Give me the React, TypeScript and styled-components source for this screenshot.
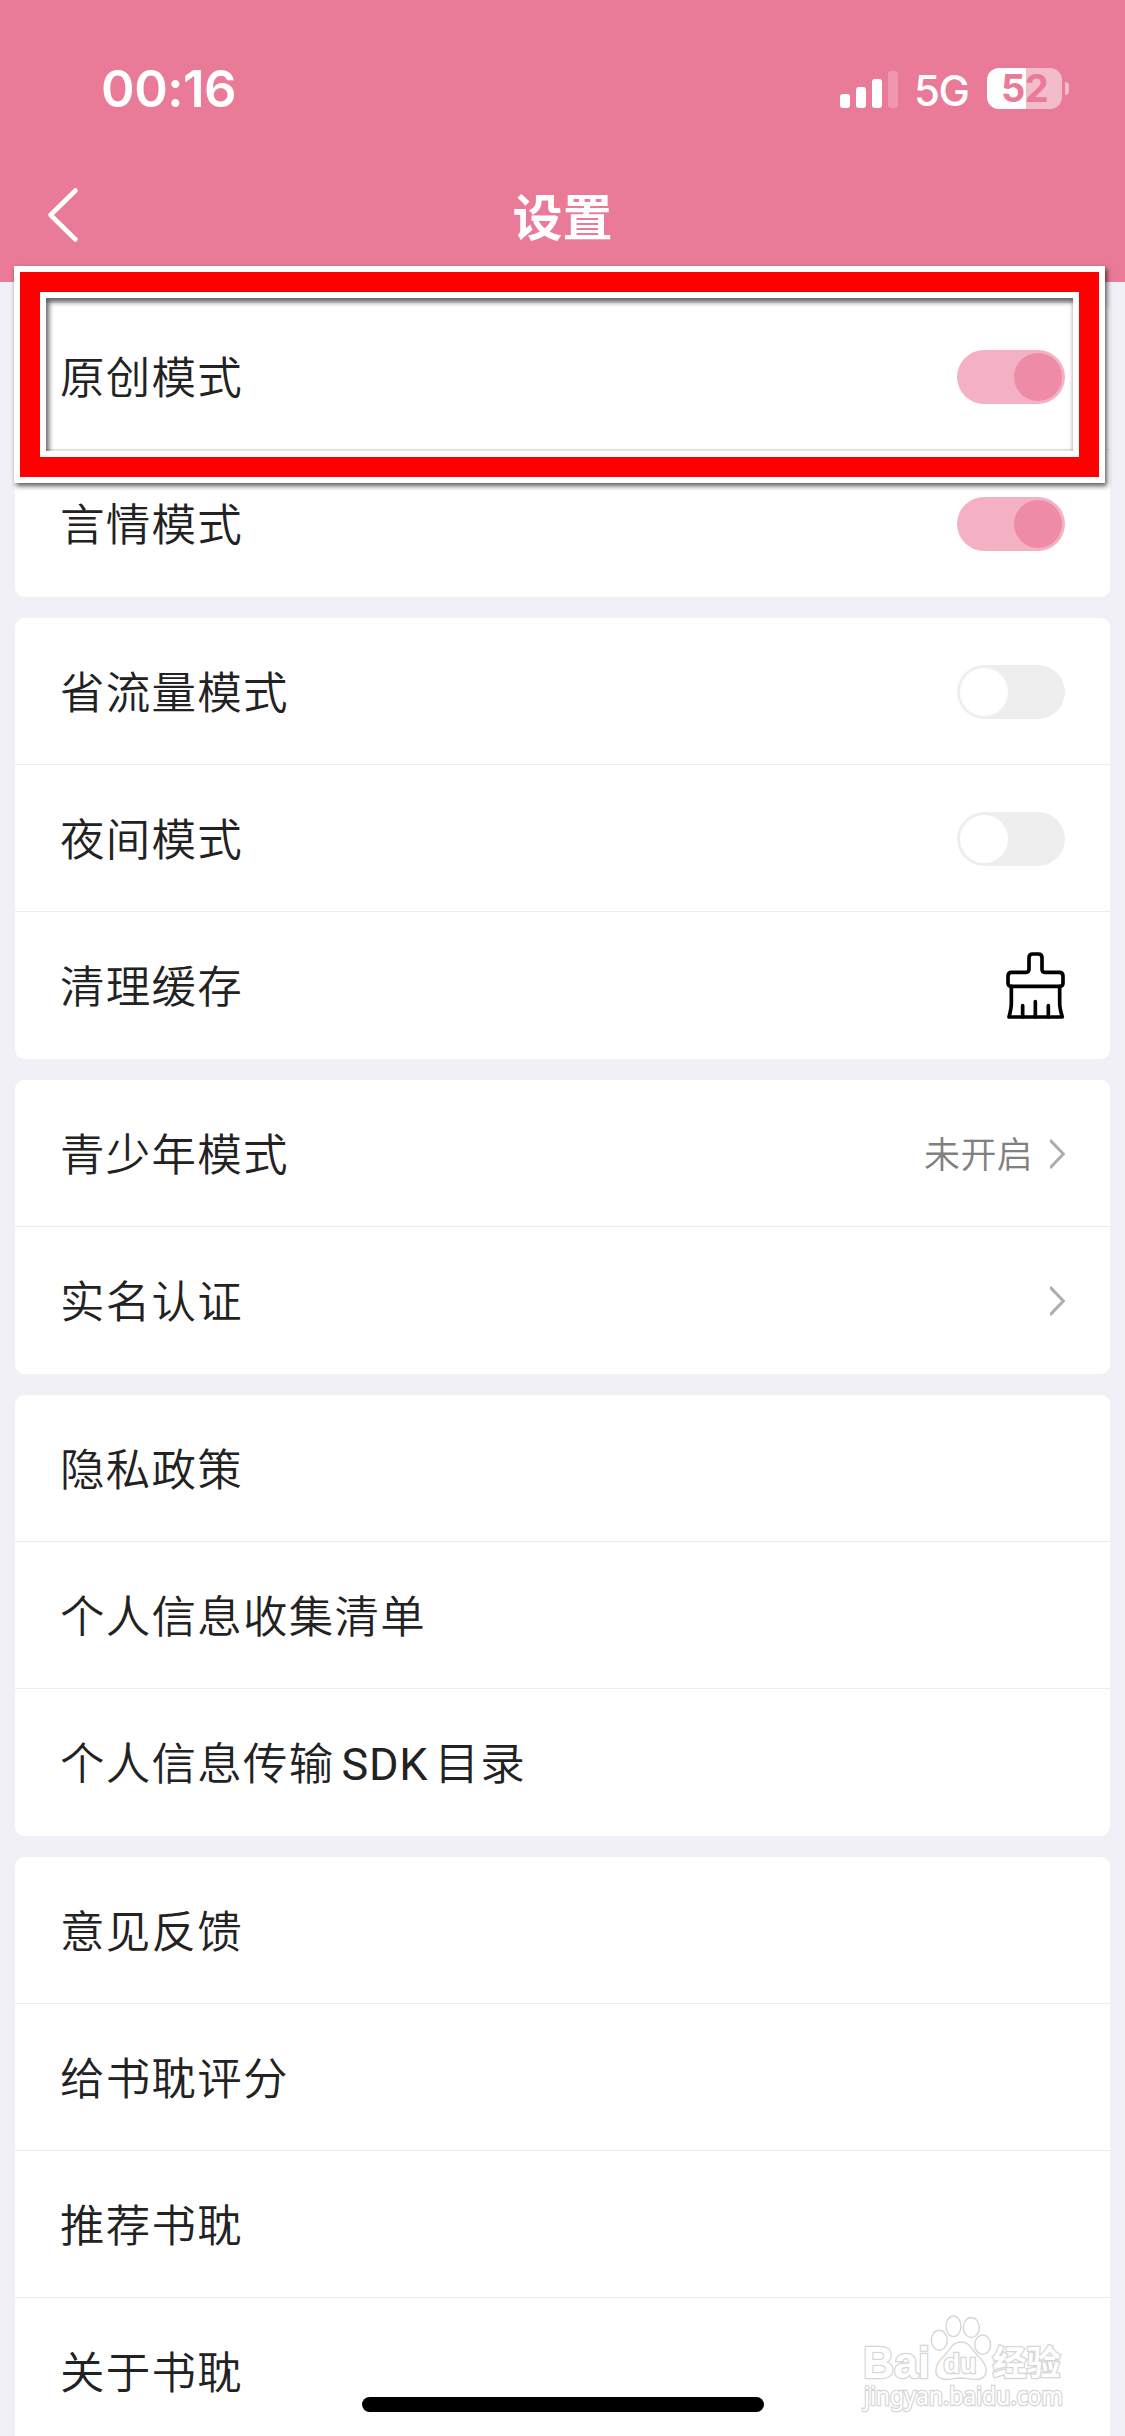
import React from "react";
import styled, { createGlobalStyle } from "styled-components";

const PINK = "#e97a98";
const CJK = `"Noto Sans CJK SC", sans-serif`;

const GlobalStyle = createGlobalStyle`
  * { box-sizing: border-box; }
  body { margin: 0; background: #f1f0f6; }
`;

const Screen = styled.main`
  position: relative;
  display: flex;
  flex-direction: column;
  width: 1125px;
  height: 2436px;
  overflow: hidden;
  background: #f1f0f6;
  font-family: Inter, ${CJK};
`;

const Header = styled.header`
  flex: none;
  height: 282px;
  background: ${PINK};
  color: #fff;
`;

const StatusBar = styled.div`
  display: flex;
  align-items: center;
  justify-content: space-between;
  height: 150px;
  padding: 27px 56px 0 101px;
`;

const Clock = styled.time`
  font-size: 51px;
  line-height: 60px;
  font-weight: 600;
  letter-spacing: -0.5px;
`;

const StatusIcons = styled.div`
  display: flex;
  align-items: center;
`;

const Signal = styled.div`
  display: flex;
  align-items: flex-end;
  gap: 6px;
  height: 38px;
`;

const Bar = styled.i<{ $height: number; $dim?: boolean }>`
  width: 10px;
  height: ${(p) => p.$height}px;
  border-radius: 3px;
  background: #fff;
  opacity: ${(p) => (p.$dim ? 0.22 : 1)};
`;

const Network = styled.span`
  width: 56px;
  margin: 4px 17px 0 16px;
  font-size: 42px;
  line-height: 48px;
  font-weight: 450;
  letter-spacing: -1.5px;
`;

const Battery = styled.div`
  display: flex;
  align-items: center;
  justify-content: center;
  width: 75px;
  height: 41px;
  border-radius: 12px;
  background: linear-gradient(90deg, #fff 39px, #f3bccb 39px);
  color: ${PINK};
  font-size: 38px;
  line-height: 41px;
  font-weight: 700;
  letter-spacing: -0.5px;
`;

const BatteryTip = styled.i`
  width: 4px;
  height: 13px;
  margin-left: 3px;
  border-radius: 0 6px 6px 0;
  background: #f3bccb;
`;

const NavBar = styled.div`
  display: grid;
  grid-template-columns: 200px 1fr 200px;
  align-items: center;
  height: 129px;
  padding-left: 46px;
`;

const Title = styled.h1`
  margin: 0 0 1px -46px;
  text-align: center;
  font-family: ${CJK};
  font-size: 50px;
  line-height: 70px;
  font-weight: 700;
`;

const Cards = styled.div`
  display: flex;
  flex-direction: column;
  gap: 21px;
  padding: 21px 15px 0;
`;

const Card = styled.section`
  border-radius: 9px;
  background: #fff;
  overflow: hidden;
`;

const Row = styled.div`
  display: flex;
  align-items: center;
  justify-content: space-between;
  height: 147px;
  padding: 1px 45px 0;
  border-bottom: 1px solid #ececec;
  &:last-child { border-bottom-color: transparent; }
`;

const Label = styled.span`
  margin-bottom: 4px;
  color: #222;
  font-family: ${CJK};
  font-size: 44.5px;
  line-height: 66px;
  letter-spacing: 1.25px;
  font-weight: 350;
`;

const Latin = styled.span`
  margin: 0 6px 0 7px;
  font-family: Roboto, sans-serif;
  font-size: 45px;
  line-height: 0;
  letter-spacing: 0.8px;
  font-weight: 400;
`;

const Track = styled.span<{ $on: boolean }>`
  display: flex;
  align-items: center;
  justify-content: ${(p) => (p.$on ? "flex-end" : "flex-start")};
  width: 108px;
  height: 54px;
  padding: 3px;
  border-radius: 27px;
  background: ${(p) => (p.$on ? "#f4b1c4" : "#eee")};
`;

const Knob = styled.i<{ $on: boolean }>`
  width: 48px;
  height: 48px;
  border-radius: 50%;
  background: ${(p) => (p.$on ? "#ee8ba7" : "#fff")};
`;

const Detail = styled.div`
  display: flex;
  align-items: center;
  gap: 17px;
`;

const DetailText = styled.span`
  margin-bottom: 4px;
  color: #808080;
  font-family: ${CJK};
  font-size: 36px;
  line-height: 54px;
  letter-spacing: 0.3px;
  font-weight: 350;
`;

const Highlight = styled.div`
  position: absolute;
  left: 14px;
  top: 265.5px;
  width: 1091px;
  height: 217px;
  border: 6px solid #fff;
  box-shadow: 2px 3px 5px 0 rgba(0, 0, 0, 0.65);
`;

const RedFrame = styled.div`
  height: 100%;
  border: 20px solid #f00;
`;

const InnerFrame = styled.div`
  height: 100%;
  border: 6px solid #fff;
  box-shadow: inset 2px 3px 5px 1px rgba(0, 0, 0, 0.6);
`;

const HomeIndicator = styled.div`
  position: absolute;
  left: 362px;
  top: 2397px;
  width: 402px;
  height: 15px;
  border-radius: 8px;
  background: #000;
`;

const Watermark = styled.svg`
  position: absolute;
  left: 855px;
  top: 2310px;
  overflow: visible;
`;

const Toggle = ({ on }: { on: boolean }) => (
  <Track $on={on} role="switch" aria-checked={on}>
    <Knob $on={on} />
  </Track>
);

const Chevron = () => (
  <svg width="15" height="30" viewBox="0 0 15 30" fill="none" stroke="#adadad" strokeWidth="3">
    <path d="M0 1 L13.4 15 L0 29" />
  </svg>
);

const BackIcon = () => (
  <svg width="34" height="58" viewBox="0 0 34 58" fill="none" stroke="#fff" strokeWidth="4.6" strokeLinecap="round" strokeLinejoin="round">
    <path d="M29.500 4.500 L4.500 29 L29.500 53.500" />
  </svg>
);

const BrushIcon = () => (
  <svg width="59" height="67" viewBox="0 0 177 201" fill="none" stroke="#000" strokeWidth="11" strokeLinecap="round" strokeLinejoin="round">
    <path d="M69 52 V17 Q69 6 80 6 H97 Q108 6 108 17 V52 Q108 61 116 61 H160 Q171 61 171 73 V93 Q171 103 162 103 H15 Q6 103 6 93 V73 Q6 61 17 61 H60 Q69 61 69 52 Z" />
    <path d="M16 103 V155 Q16 168 9 195 H169 Q161 168 161 155 V103" />
    <path d="M50 161 V195 M88 149 V195 M127 161 V195" />
  </svg>
);

const Outlined = styled.text`
  paint-order: stroke;
`;

type Item = { label: React.ReactNode; end?: React.ReactNode };

const groups: Item[][] = [
  [
    { label: "原创模式", end: <Toggle on /> },
    { label: "言情模式", end: <Toggle on /> },
  ],
  [
    { label: "省流量模式", end: <Toggle on={false} /> },
    { label: "夜间模式", end: <Toggle on={false} /> },
    { label: "清理缓存", end: <BrushIcon /> },
  ],
  [
    { label: "青少年模式", end: <Detail><DetailText>未开启</DetailText><Chevron /></Detail> },
    { label: "实名认证", end: <Chevron /> },
  ],
  [
    { label: "隐私政策" },
    { label: "个人信息收集清单" },
    { label: <>个人信息传输<Latin>SDK</Latin>目录</> },
  ],
  [
    { label: "意见反馈" },
    { label: "给书耽评分" },
    { label: "推荐书耽" },
    { label: "关于书耽" },
  ],
];

export default function App() {
  return (
    <Screen>
      <GlobalStyle />
      <Header>
        <StatusBar>
          <Clock>00:16</Clock>
          <StatusIcons>
            <Signal>
              <Bar $height={14} />
              <Bar $height={21} />
              <Bar $height={29} />
              <Bar $height={37} $dim />
            </Signal>
            <Network>5G</Network>
            <Battery>52</Battery>
            <BatteryTip />
          </StatusIcons>
        </StatusBar>
        <NavBar>
          <BackIcon />
          <Title>设置</Title>
        </NavBar>
      </Header>
      <Cards>
        {groups.map((items, g) => (
          <Card key={g}>
            {items.map((item, i) => (
              <Row key={i}>
                <Label>{item.label}</Label>
                {item.end}
              </Row>
            ))}
          </Card>
        ))}
      </Cards>
      <Highlight>
        <RedFrame>
          <InnerFrame />
        </RedFrame>
      </Highlight>
      <Watermark width="215" height="110" viewBox="0 0 215 110" fill="#fff" stroke="#d6d6d6" strokeWidth="2.6">
        <g strokeWidth="1.4">
          <ellipse cx="84.300" cy="30.300" rx="8" ry="10" />
          <ellipse cx="98.500" cy="16.300" rx="7.500" ry="10.300" />
          <ellipse cx="116.300" cy="17.500" rx="8" ry="10" />
          <ellipse cx="127.700" cy="34.700" rx="8" ry="9.700" />
          <path d="M106 32 C115 32 117 40 123 46 C131 53 134 63 128 67.500 C122 72 115 68 106 68 C97 68 91 72 84 67.500 C78 63 81 53 89 46 C95 40 97 32 106 32 Z" />
        </g>
        <g fontFamily="Liberation Sans, sans-serif" fontWeight="700">
          <Outlined x="8" y="67.500" fontSize="45" textLength="67" lengthAdjust="spacingAndGlyphs">Bai</Outlined>
          <Outlined x="88.500" y="63" fontSize="27" textLength="33" lengthAdjust="spacingAndGlyphs">du</Outlined>
          <Outlined x="137.500" y="65" fontSize="34.500" textLength="68" lengthAdjust="spacingAndGlyphs" fontFamily="Noto Sans CJK SC, sans-serif">经验</Outlined>
        </g>
        <Outlined x="9" y="95" fontSize="24.500" textLength="199" lengthAdjust="spacingAndGlyphs" fontFamily="Noto Sans, sans-serif">jingyan.baidu.com</Outlined>
      </Watermark>
      <HomeIndicator />
    </Screen>
  );
}
